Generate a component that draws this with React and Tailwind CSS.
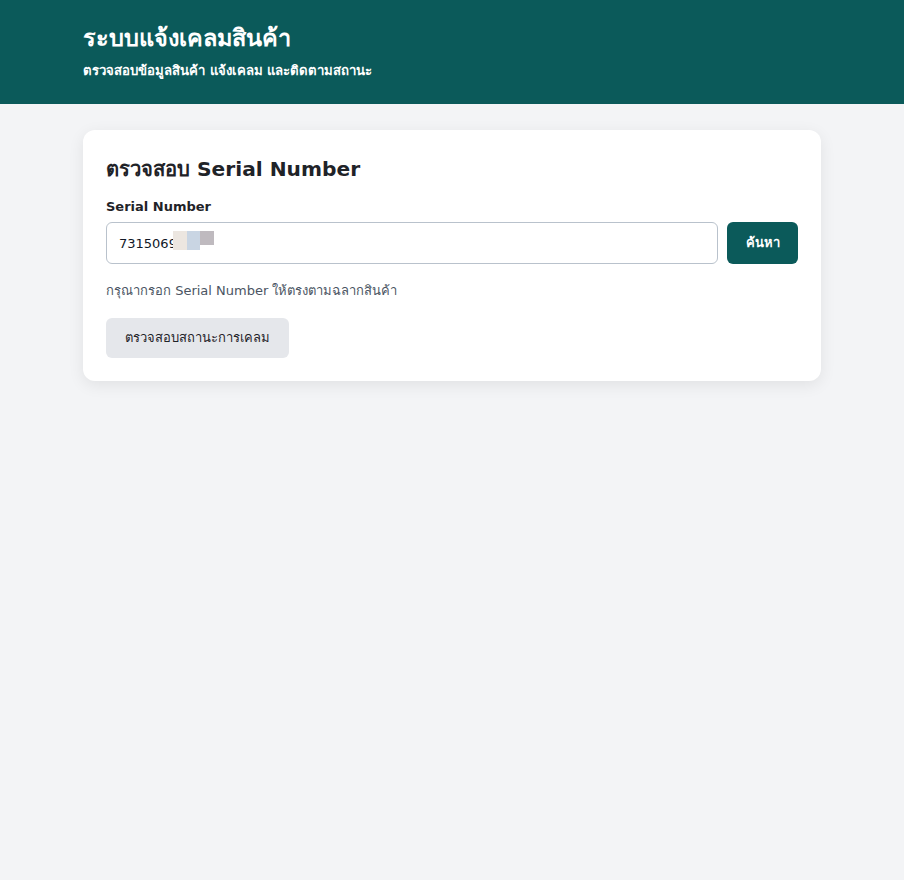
import { useState } from "react";

export default function App() {
    const [serial, setSerial] = useState("7315069");

    return (
        <div className="min-h-[880px] bg-[#f3f4f6] font-['Tahoma','DejaVu_Sans','Noto_Sans',sans-serif] text-[#1f2937]">
            {/* Header */}
            <header className="bg-[#0b5a5a] text-white">
                <div className="w-[738px] mx-auto pt-[23px] pb-[24px]">
                    <h1 className="text-[23.5px] font-bold leading-[31px]">ระบบแจ้งเคลมสินค้า</h1>
                    <p className="mt-[8px] text-[13.2px] font-bold leading-[18px]">
                        ตรวจสอบข้อมูลสินค้า แจ้งเคลม และติดตามสถานะ
                    </p>
                </div>
            </header>

            {/* Serial lookup card */}
            <main className="w-[738px] mx-auto pt-[26px]">
                <div className="bg-white rounded-xl shadow-[0_4px_16px_rgba(0,0,0,0.08)] px-[23px] pt-[25px] pb-[23px]">
                    <h2 className="text-[20.2px] font-bold leading-[28px] text-[#1f2328]">ตรวจสอบ Serial Number</h2>

                    <label className="block mt-[14px] text-[13px] font-bold leading-[20px] text-[#1f2328]">
                        Serial Number
                    </label>
                    <div className="mt-[5px] flex gap-[9px]">
                        <div className="relative flex-1">
                            <input
                                value={serial}
                                onChange={(e) => setSerial(e.target.value)}
                                className="w-full h-[42px] border border-[#b9c2cc] rounded-md px-[12px] text-[13px] text-[#111827] outline-none"
                            />
                            {/* masked digits */}
                            <div className="absolute left-[67px] top-[9px] flex pointer-events-none">
                                <span className="w-[14px] h-[19px] bg-[#ece6e0]" />
                                <span className="w-[13px] h-[19px] bg-[#c9d5e3]" />
                                <span className="w-[14px] h-[14px] bg-[#bfbabf]" />
                            </div>
                        </div>
                        <button className="w-[71px] h-[42px] rounded-md bg-[#0b5a5a] text-white text-[13px] font-bold">
                            ค้นหา
                        </button>
                    </div>

                    <p className="mt-[18px] text-[13px] leading-[18px] text-[#4b5563]">
                        กรุณากรอก Serial Number ให้ตรงตามฉลากสินค้า
                    </p>

                    <button className="mt-[18px] h-[40px] px-[19px] rounded-md bg-[#e5e7eb] text-[13px] font-medium text-[#1f2328]">
                        ตรวจสอบสถานะการเคลม
                    </button>
                </div>
            </main>
        </div>
    );
}
